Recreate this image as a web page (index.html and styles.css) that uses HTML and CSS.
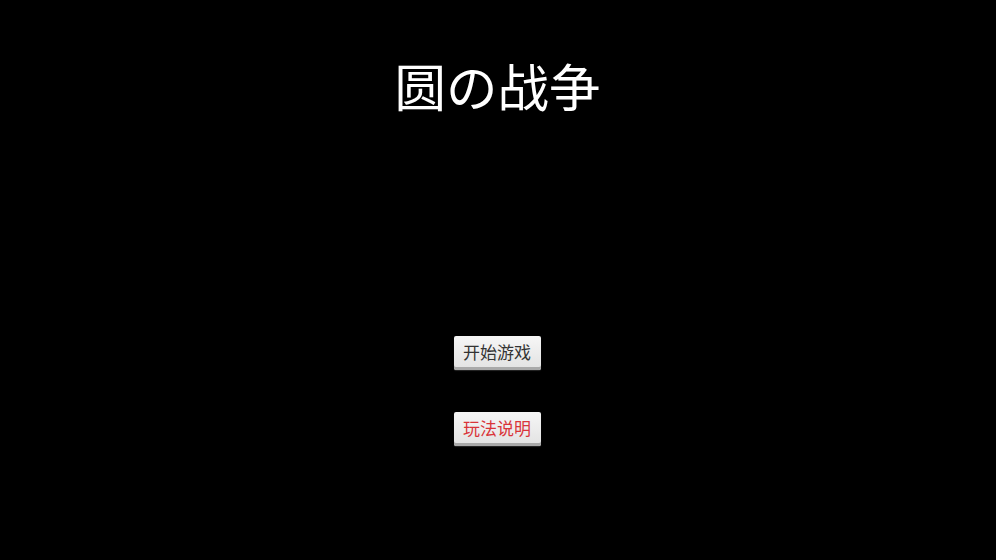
FILE: index.html
```html
<!DOCTYPE html>
<html lang="zh">
<head>
<meta charset="utf-8">
<link rel="stylesheet" href="styles.css">
</head>
<body>
<main class="screen">
  <h1 class="title">圆の战争</h1>
  <div class="menu">
    <button class="btn">开始游戏</button>
    <button class="btn btn-red">玩法说明</button>
  </div>
</main>
</body>
</html>
```
FILE: styles.css
```css
html, body {
  margin: 0;
  padding: 0;
  background: #000;
  height: 100%;
}
.screen {
  display: flex;
  flex-direction: column;
  align-items: center;
  height: 560px;
  font-family: "Noto Sans CJK SC", "Noto Sans", sans-serif;
}
.title {
  margin: 55px 0 0 0;
  font-size: 51.5px;
  font-weight: normal;
  line-height: 60px;
  color: #fff;
  padding-right: 1px;
}
.menu {
  margin-top: 221px;
  display: flex;
  flex-direction: column;
  align-items: center;
  gap: 42px;
}
.btn {
  width: 87px;
  height: 34px;
  padding: 0;
  border: none;
  border-radius: 2px;
  background: linear-gradient(#f6f6f6, #e2e2e2);
  box-shadow: inset 0 -3px 0 #a9a9a9, 0 1px 1px rgba(255,255,255,0.15);
  font-family: "Noto Sans CJK SC", "Noto Sans", sans-serif;
  font-size: 17px;
  line-height: 30px;
  color: #333;
  padding-bottom: 3px;
  margin-left: -2px;
}
.btn-red {
  color: #d9343a;
}
```
